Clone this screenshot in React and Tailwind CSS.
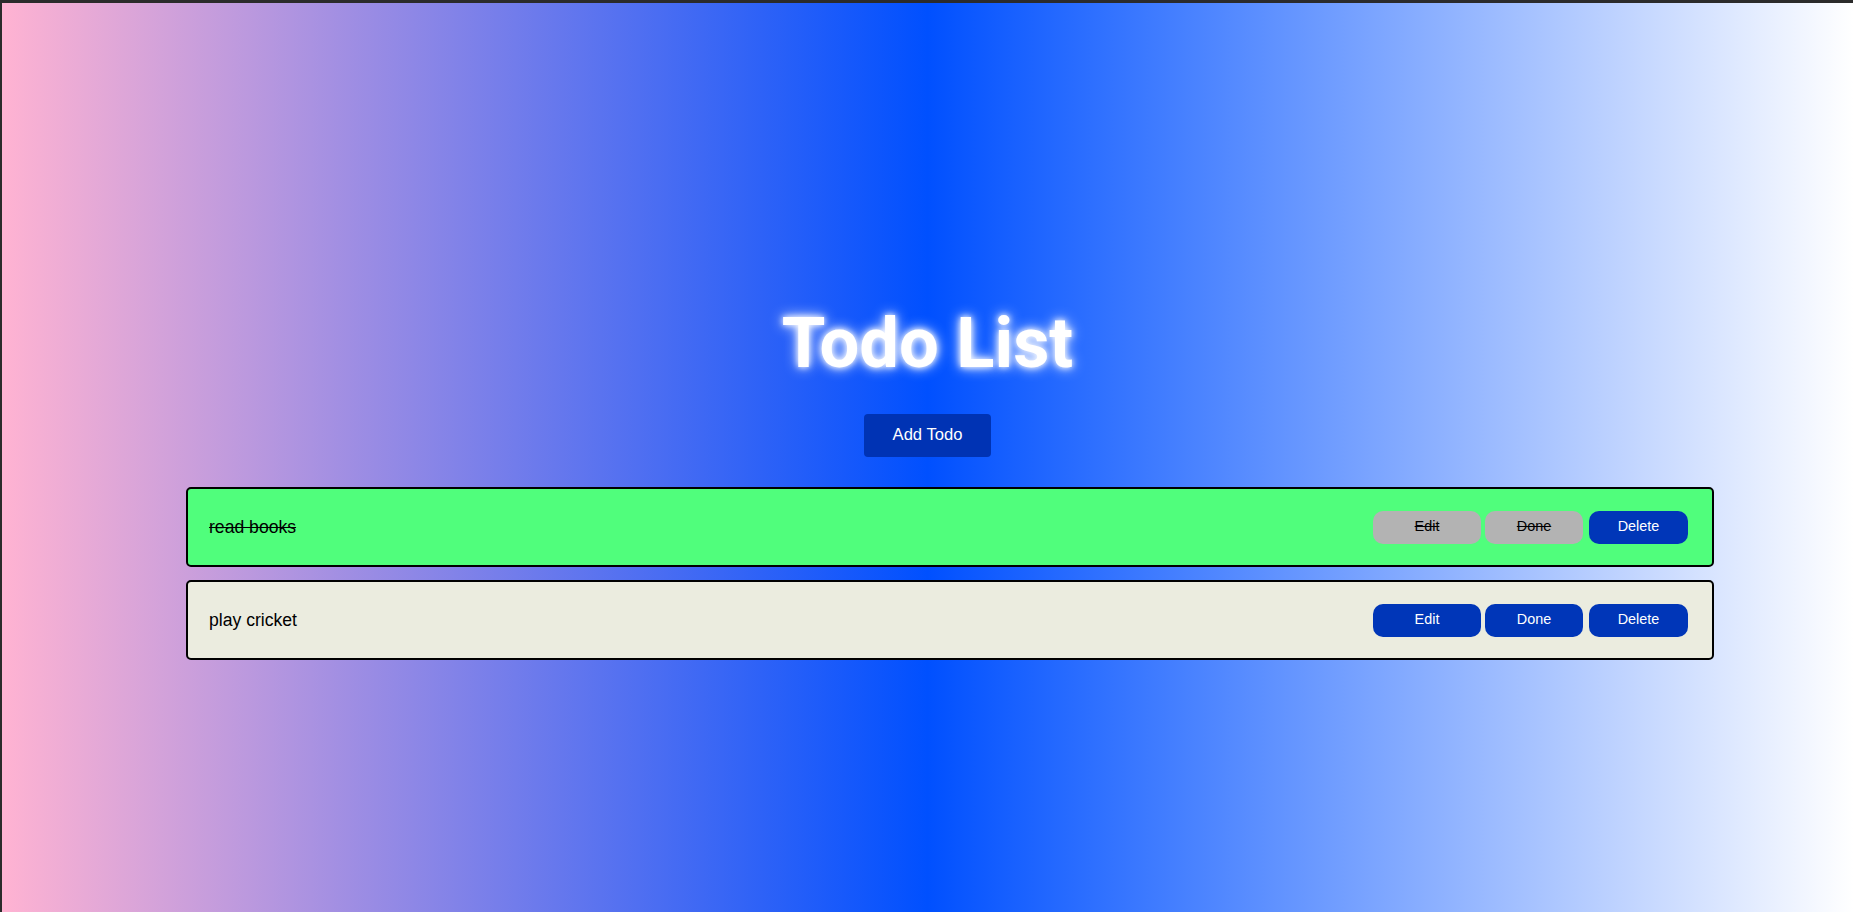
import React, { useState } from "react";

const initialTodos = [
  { id: 1, text: "read books", done: true },
  { id: 2, text: "play cricket", done: false },
];

const TodoItem = ({ todo, onToggle, onDelete }) => {
  const btnBase =
    "h-[33px] rounded-[10px] text-[14.4px] flex items-center justify-center";
  const disabledCls = todo.done
    ? "bg-[#b3b3b3] text-black line-through"
    : "bg-[#0036b8] text-white";

  return (
    <div
      className={`flex items-center justify-between h-[80px] border-2 border-black rounded-[5px] pl-[21px] pr-[24px] ${
        todo.done ? "bg-[#50fe7c]" : "bg-[#ebecdf]"
      }`}
    >
      <span
        className={`text-[17.6px] text-black ${todo.done ? "line-through" : ""}`}
      >
        {todo.text}
      </span>
      <div className="flex items-center">
        <button type="button" className={`${btnBase} ${disabledCls} w-[108px]`}>
          Edit
        </button>
        <button
          type="button"
          onClick={() => onToggle(todo.id)}
          className={`${btnBase} ${disabledCls} w-[98px] ml-[4px]`}
        >
          Done
        </button>
        <button
          type="button"
          onClick={() => onDelete(todo.id)}
          className={`${btnBase} bg-[#0036b8] text-white w-[99px] ml-[6px]`}
        >
          Delete
        </button>
      </div>
    </div>
  );
};

const App = () => {
  const [todos, setTodos] = useState(initialTodos);

  const toggleTodo = (id) => {
    setTodos(todos.map((t) => (t.id === id ? { ...t, done: !t.done } : t)));
  };

  const deleteTodo = (id) => {
    setTodos(todos.filter((t) => t.id !== id));
  };

  return (
    <div className="bg-[#2b2b2b] pt-[3px] pl-[2px] h-[912px] font-['Liberation_Sans',Arial,sans-serif]">
      <div className="h-full bg-[linear-gradient(to_right,#ffb3d2,#0050ff,#ffffff)] pt-[300px]">
        <h1 className="text-center text-white font-['Roboto',sans-serif] font-bold text-[70.5px] leading-[80px] [text-shadow:0_0_6px_#fff,0_0_14px_#fff]">
          Todo List
        </h1>
        <div className="flex justify-center mt-[31px]">
          <button
            type="button"
            className="w-[127px] h-[43px] rounded-[4px] bg-[#0033b4] text-white text-[16.6px]"
          >
            Add Todo
          </button>
        </div>
        <div className="flex flex-col gap-[13px] mt-[30px] pl-[184px] pr-[139px]">
          {todos.map((todo) => (
            <TodoItem
              key={todo.id}
              todo={todo}
              onToggle={toggleTodo}
              onDelete={deleteTodo}
            />
          ))}
        </div>
      </div>
    </div>
  );
};

export default App;
